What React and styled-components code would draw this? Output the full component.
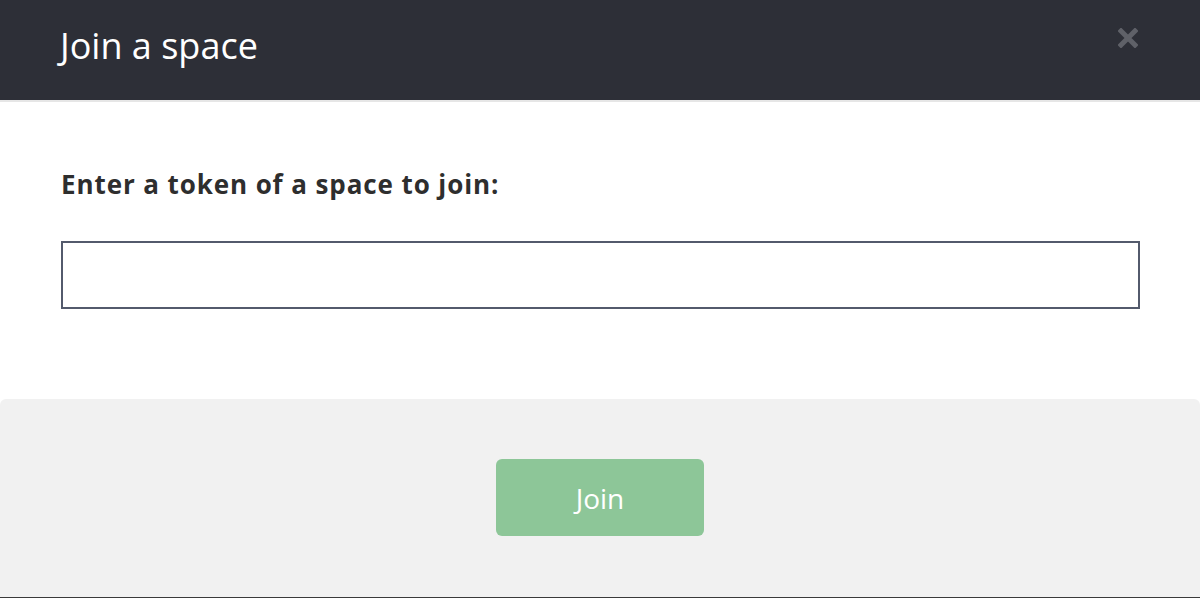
import React from 'react';
import styled, { createGlobalStyle } from 'styled-components';

const GlobalStyle = createGlobalStyle`
  html, body {
    margin: 0;
    padding: 0;
    background: #ffffff;
    font-family: "Open Sans", "Noto Sans", sans-serif;
  }
`;

const Modal = styled.div`
  width: 1200px;
  height: 598px;
  display: flex;
  flex-direction: column;
  background: #ffffff;
  overflow: hidden;
`;

const Header = styled.header`
  height: 100px;
  flex-shrink: 0;
  display: flex;
  align-items: flex-start;
  justify-content: space-between;
  padding: 0 60px 0 60px;
  background: #2d2f37;
  border-bottom: 2px solid #e6e6e6;
`;

const Title = styled.h1`
  margin: 24px 0 0;
  color: #ffffff;
  font-size: 36px;
  font-weight: 400;
  line-height: 44px;
`;

const Close = styled.button`
  margin: 26px 0 0 0;
  padding: 0;
  border: none;
  background: none;
  width: 24px;
  height: 24px;
  display: flex;
  align-items: center;
  justify-content: center;
  cursor: pointer;
`;

const Body = styled.div`
  flex: 1;
  padding: 60px 60px 0 61px;
`;

const Label = styled.label`
  display: block;
  color: #2e2e2e;
  font-size: 26px;
  font-weight: 700;
  letter-spacing: 0.9px;
  line-height: 44px;
  margin-bottom: 35px;
`;

const Input = styled.input`
  display: block;
  box-sizing: border-box;
  width: 1079px;
  height: 68px;
  border: 2px solid #535a6c;
  border-radius: 0;
  outline: none;
  font-family: inherit;
  font-size: 20px;
  padding: 0 16px;
`;

const Footer = styled.footer`
  height: 199px;
  flex-shrink: 0;
  display: flex;
  justify-content: center;
  align-items: flex-start;
  padding-top: 60px;
  box-sizing: border-box;
  background: #f1f1f1;
  border-radius: 6px 6px 0 0;
  border-bottom: 1px solid #3a3a3a;
`;

const Button = styled.button`
  width: 208px;
  height: 77px;
  border: none;
  border-radius: 6px;
  background: #8dc698;
  color: #ffffff;
  font-family: inherit;
  font-size: 28px;
  font-weight: 400;
  cursor: pointer;
`;

function CloseIcon() {
  return (
    <svg width="20" height="20" viewBox="0 0 20 20">
      <path d="M3 3 L17 17 M17 3 L3 17" stroke="#5f6168" strokeWidth="5" strokeLinecap="square" />
    </svg>
  );
}

function App() {
  return (
    <>
      <GlobalStyle />
      <Modal>
        <Header>
          <Title>Join a space</Title>
          <Close aria-label="Close">
            <CloseIcon />
          </Close>
        </Header>
        <Body>
          <Label htmlFor="token">Enter a token of a space to join:</Label>
          <Input id="token" type="text" />
        </Body>
        <Footer>
          <Button>Join</Button>
        </Footer>
      </Modal>
    </>
  );
}

export default App;
